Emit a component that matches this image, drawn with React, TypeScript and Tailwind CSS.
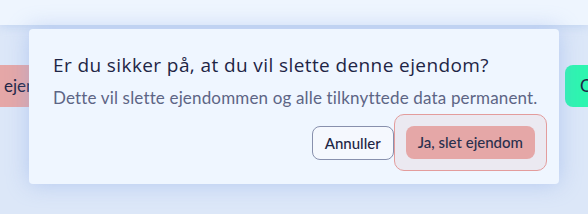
export default function App() {
  return (
    <div className="relative w-[588px] h-[214px] overflow-hidden bg-[#dce7f8] font-['Lato',sans-serif]">
      {/* header strip */}
      <div className="h-[25px] bg-[#eef5fe] shadow-[0_2px_8px_rgba(150,180,230,0.35)]" />

      {/* underlying page buttons */}
      <div className="mt-[40px] flex justify-between">
        <div className="h-[42px] w-[120px] pl-1 flex items-center rounded-r-lg bg-[#e5a7a7] text-[17px] text-[#1e2545]">
          ejendom
        </div>
        <div className="h-[42px] w-[23px] pl-[15px] flex items-center rounded-l-lg bg-[#2ef5b0] text-[17px] text-[#1e2545] overflow-hidden whitespace-nowrap">
          Opret ejendom
        </div>
      </div>

      {/* confirm dialog */}
      <div className="absolute left-[29px] top-[29px] w-[530px] isolate rounded bg-[#eff6ff] shadow-[0_0_22px_rgba(130,165,230,0.45)] px-6 pt-[22px] pb-6">
        <h2 className="font-['Open_Sans',sans-serif] text-[19px] leading-[28px] tracking-[0.4px] font-normal text-[#1e2545] whitespace-nowrap">
          Er du sikker på, at du vil slette denne ejendom?
        </h2>
        <p className="mt-[7px] text-[17px] leading-6 tracking-[0.16px] text-[#5d6585] whitespace-nowrap">
          Dette vil slette ejendommen og alle tilknyttede data permanent.
        </p>
        <div className="mt-4 flex items-start justify-end gap-3">
          <button className="h-[34px] px-3 rounded-lg border border-[#8890ad] bg-[#f5f8fe] text-[15px] font-medium text-[#1e2545]">
            Annuller
          </button>
          <button className="relative h-[33px] px-3 rounded-lg bg-[#e5a7a7] text-[15px] font-medium text-[#2a2f4d] before:content-[''] before:absolute before:-inset-3 before:-z-10 before:rounded-[10px] before:border before:border-[#e39c9c] before:bg-[#ebe9f1]">
            Ja, slet ejendom
          </button>
        </div>
      </div>
    </div>
  );
}
